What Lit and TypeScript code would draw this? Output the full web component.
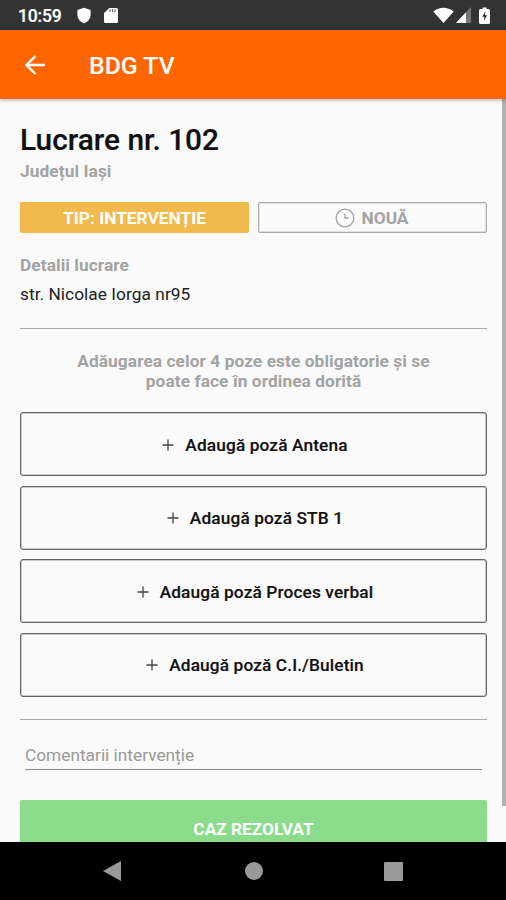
import { LitElement, html, css } from "lit";
import { customElement, property } from "lit/decorators.js";

@customElement("status-bar")
class StatusBar extends LitElement {
  static styles = css`
    :host { display: flex; align-items: center; justify-content: space-between; height: 30px; background: #333; color: #fff; box-sizing: border-box; padding: 0 16px 0 18px; }
    .time { font: 500 17.6px/30px Roboto, sans-serif; width: 59px; padding-top: 1px; box-sizing: border-box; letter-spacing: -0.2px; -webkit-text-stroke: .2px #fff; }
    .group { display: flex; align-items: center; height: 30px; }
    svg { display: block; }
    .card { margin-left: 13px; }
    .signal { margin-left: 2px; }
    .battery { margin-left: 8px; }
  `;
  render() {
    return html`
      <div class="group">
        <div class="time">10:59</div>
        <svg width="14" height="17" viewBox="0 0 14 17"><path fill="#fff" d="M7 .8 13.600 3v5c0 3.600-2.600 6.800-6.600 8.300C3 14.800.400 11.600.400 8V3z"/></svg>
        <svg class="card" width="14" height="17" viewBox="0 0 14 17"><path fill="#fff" d="M5.300 1h7.200Q14 1 14 2.500v12Q14 16 12.500 16h-11Q0 16 0 14.500V6z"/><path stroke="#666" stroke-width="1.100" d="M6 2v3M8.500 2v3M11 2v3"/></svg>
      </div>
      <div class="group">
        <svg width="21" height="17" viewBox="0 0 21 17"><path fill="#fff" d="M.3 4.500Q10.500-3 20.700 4.500L10.500 16z"/></svg>
        <svg class="signal" width="15" height="16" viewBox="0 0 15 16"><path fill="#777" d="M15 0v16H0z"/><path fill="#fff" d="M10 5.300V16H0z"/></svg>
        <svg class="battery" width="11" height="17" viewBox="0 0 11 17"><path fill="#fff" d="M3.500.5h4V2h2Q11 2 11 3.500v12q0 1.500-1.500 1.500h-8Q0 17 0 15.500v-12Q0 2 1.500 2h2z"/><path fill="#333" d="M6.300 4.500 3.300 9.700h1.900v3.800l2.900-5.200H6.200z"/></svg>
      </div>`;
  }
}

@customElement("photo-button")
class PhotoButton extends LitElement {
  @property() label = "";
  static styles = css`
    :host { display: block; }
    .button { display: flex; align-items: center; justify-content: center; gap: 11px; width: 100%; height: 64px; box-sizing: border-box; padding: 1px 0 0 3px; border: 1px solid #666; box-shadow: inset 0 0 0 .5px #999; border-radius: 3px; background: #fafafa; color: #111; font: 500 17.3px/22px Roboto, sans-serif; letter-spacing: .12px; -webkit-text-stroke: .15px #111; }
    svg { display: block; }
  `;
  render() {
    return html`<button class="button">
      <svg width="12" height="12" viewBox="0 0 12 12"><path d="M6 .5v11M.5 6h11" stroke="#444" stroke-width="1.300"/></svg>
      <span>${this.label}</span>
    </button>`;
  }
}

@customElement("app-root")
class AppRoot extends LitElement {
  private photos = ["Adaugă poză Antena", "Adaugă poză STB 1", "Adaugă poză Proces verbal", "Adaugă poză C.I./Buletin"];

  static styles = css`
    :host { display: flex; flex-direction: column; height: 900px; overflow: hidden; background: #fafafa; font-family: Roboto, sans-serif; color: #111; }
    svg { display: block; }
    .bar { display: flex; align-items: center; flex: none; height: 69px; padding-left: 25px; background: #f60; color: #fff; box-sizing: border-box; box-shadow: 0 1px 4px rgba(0,0,0,.3); z-index: 1; }
    .name { margin-left: 44px; padding-top: 3px; font-size: 24.8px; font-weight: 500; line-height: 30px; }
    .screen { display: flex; flex: 1; min-height: 0; overflow: hidden; }
    .content { flex: 1; padding: 23px 15px 0 20px; min-width: 0; }
    .thumb { width: 4px; height: 707px; background: #b1b1b1; }
    .title { font-size: 29.8px; font-weight: 500; line-height: 36px; -webkit-text-stroke: .2px #111; }
    .muted { color: #a3a3a3; font-size: 17.3px; font-weight: 700; letter-spacing: .08px; }
    .county { line-height: 22px; margin-top: 2px; }
    .tags { display: grid; grid-template-columns: 1fr 1fr; gap: 9px; margin-top: 20px; }
    .tag { display: flex; align-items: center; justify-content: center; gap: 7px; height: 31px; box-sizing: border-box; border-radius: 2px; font-size: 17.3px; font-weight: 700; }
    .type { background: #f2b94d; color: #fff; }
    .state { border: 1px solid #aaa; box-shadow: inset 0 0 0 .5px #ccc; color: #a3a3a3; padding-right: 2px; }
    .details { line-height: 22px; margin-top: 21px; }
    .address { font-size: 17.3px; letter-spacing: .05px; line-height: 22px; margin-top: 7px; color: #222; }
    .rule { height: 1px; background: #aaa; }
    .first { margin-top: 23px; }
    .hint { text-align: center; line-height: 20px; margin: 22px 0 21px; }
    .photos { display: flex; flex-direction: column; gap: 9.6px; margin-bottom: 22px; }
    .comment { margin: 24px 5px 0; padding-bottom: 3px; border-bottom: 1px solid #888; font-size: 17.3px; line-height: 22px; color: #999; }
    .resolve { margin-top: 30px; height: 60px; border-radius: 2px; background: #8bdc8a; color: #fff; text-align: center; font-size: 17.3px; font-weight: 700; line-height: 59px; }
    .nav { display: flex; align-items: center; flex: none; height: 58px; background: #000; z-index: 1; padding-left: 103px; }
    .home { margin: 0 121.5px 0 123.5px; }
  `;

  render() {
    return html`
      <status-bar></status-bar>
      <header class="bar">
        <svg width="20" height="20" viewBox="0 0 20 20"><path d="M10.500 1 1.500 10l9 9M1.500 10H20" fill="none" stroke="#fff" stroke-width="2.300"/></svg>
        <div class="name">BDG TV</div>
      </header>
      <main class="screen">
        <div class="content">
          <div class="title">Lucrare nr. 102</div>
          <div class="muted county">Județul Iași</div>
          <div class="tags">
            <div class="tag type">TIP: INTERVENȚIE</div>
            <div class="tag state">
              <svg width="20" height="20" viewBox="0 0 20 20" fill="none" stroke="#a3a3a3" stroke-width="1.300"><circle cx="10" cy="10" r="8.800"/><path d="M10 5.800V10h3.500"/></svg>
              <span>NOUĂ</span>
            </div>
          </div>
          <div class="muted details">Detalii lucrare</div>
          <div class="address">str. Nicolae Iorga nr95</div>
          <div class="rule first"></div>
          <div class="muted hint">Adăugarea celor 4 poze este obligatorie și se<br>poate face în ordinea dorită</div>
          <div class="photos">${this.photos.map((p) => html`<photo-button .label=${p}></photo-button>`)}</div>
          <div class="rule"></div>
          <div class="comment">Comentarii intervenție</div>
          <div class="resolve">CAZ REZOLVAT</div>
        </div>
        <div class="thumb"></div>
      </main>
      <nav class="nav">
        <svg width="18" height="20" viewBox="0 0 18 20"><path d="M0 10 18 0v20z" fill="#999"/></svg>
        <svg class="home" width="18" height="18" viewBox="0 0 18 18"><circle cx="9" cy="9" r="9" fill="#999"/></svg>
        <svg width="19" height="19" viewBox="0 0 19 19"><rect width="19" height="19" rx="1" fill="#999"/></svg>
      </nav>`;
  }
}
